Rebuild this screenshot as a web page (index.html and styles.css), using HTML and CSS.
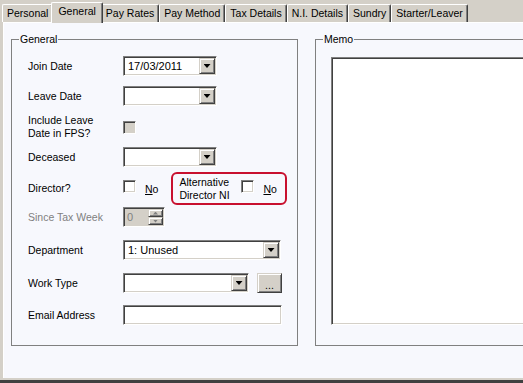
FILE: index.html
```html
<!DOCTYPE html>
<html lang="en">
<head>
    <meta charset="UTF-8">
    <title>Employee - General</title>
    <link rel="stylesheet" href="styles.css">
</head>
<body>
    <div class="tabs">
        <div class="tab">Personal</div>
        <div class="tab active">General</div>
        <div class="tab">Pay Rates</div>
        <div class="tab">Pay Method</div>
        <div class="tab">Tax Details</div>
        <div class="tab">N.I. Details</div>
        <div class="tab">Sundry</div>
        <div class="tab">Starter/Leaver</div>
    </div>

    <div class="panel">
        <fieldset class="group general">
            <legend>General</legend>
            <div class="rows">
                <div class="row">
                    <span class="label">Join Date</span>
                    <div class="combo combo-short"><span class="combo-text">17/03/2011</span><span class="drop"></span></div>
                </div>
                <div class="row">
                    <span class="label">Leave Date</span>
                    <div class="combo combo-short"><span class="combo-text"></span><span class="drop"></span></div>
                </div>
                <div class="row tall">
                    <span class="label">Include Leave<br>Date in FPS?</span>
                    <span class="check disabled"></span>
                </div>
                <div class="row">
                    <span class="label">Deceased</span>
                    <div class="combo combo-short"><span class="combo-text"></span><span class="drop"></span></div>
                </div>
                <div class="row alt-row">
                    <span class="label">Director?</span>
                    <span class="check"></span>
                    <span class="opt"><u>N</u>o</span>
                    <!-- highlighted option -->
                    <div class="alt">
                        <span class="alt-label">Alternative<br>Director NI</span>
                        <span class="check"></span>
                        <span class="opt"><u>N</u>o</span>
                    </div>
                </div>
                <div class="row">
                    <span class="label disabled">Since Tax Week</span>
                    <div class="spin">
                        <span class="spin-val">0</span>
                        <span class="spin-btns">
                            <span class="spin-btn up"></span>
                            <span class="spin-btn down"></span>
                        </span>
                    </div>
                </div>
                <div class="row">
                    <span class="label">Department</span>
                    <div class="combo combo-wide"><span class="combo-text">1: Unused</span><span class="drop"></span></div>
                </div>
                <div class="row">
                    <span class="label">Work Type</span>
                    <div class="combo combo-mid"><span class="combo-text"></span><span class="drop"></span></div>
                    <button class="dots">...</button>
                </div>
                <div class="row">
                    <span class="label">Email Address</span>
                    <input type="text" class="field">
                </div>
            </div>
        </fieldset>

        <fieldset class="group memo">
            <legend>Memo</legend>
            <textarea class="memo-box"></textarea>
        </fieldset>
    </div>
    <div class="frame-bottom"></div>
</body>
</html>
```

FILE: styles.css
```css
body {
    margin: 0;
    width: 523px;
    height: 383px;
    overflow: hidden;
    background-color: #d4d0c8;
    font-family: "Liberation Sans", Arial, sans-serif;
    font-size: 10.5px;
    color: #000;
}

/* tab strip */
.tabs {
    display: flex;
    align-items: flex-end;
    height: 22px;
    padding-left: 2px;
    position: relative;
    z-index: 1;
}
.tab {
    height: 18px;
    box-sizing: border-box;
    padding: 0 4px;
    line-height: 16px;
    white-space: nowrap;
    border-top: 1px solid #fff;
    border-left: 1px solid #fff;
    border-right: 1px solid #404040;
    border-radius: 2px 2px 0 0;
    box-shadow: inset -1px 0 #808080;
}
.tab.active {
    height: 21px;
    margin: 0 -2px -1px;
    padding: 0 6px;
    line-height: 16px;
    background-color: #d4d0c8;
    position: relative;
}

/* page body */
.panel {
    display: flex;
    height: 356px;
    box-sizing: border-box;
    margin-left: 3px;
    padding: 10px 0 0 7px;
    border-top: 1px solid #fff;
    border-left: 1px solid #fff;
    background-color: #f7f8fd;
    overflow: hidden;
}
.frame-bottom {
    height: 3px;
    margin-top: 2px;
    background-color: #404040;
}

.group {
    flex: none;
    margin: 0;
    box-sizing: border-box;
    height: 313px;
    min-width: 0;
    border: 1px solid #808080;
}
.group legend {
    padding: 0 1px;
    line-height: 12px;
}
.general {
    width: 287px;
    padding: 11px 0 0 16px;
}
.general legend {
    margin-left: -9px;
}
.memo {
    width: 240px;
    margin-left: 17px;
    padding: 12px 0 0 15px;
}
.memo legend {
    margin-left: -8px;
}

.rows {
    display: grid;
    grid-template-rows: 30px 27px 34px 25px 35px 33px 33px 32px 20px;
    align-items: start;
}
.row {
    display: flex;
    align-items: center;
    height: 20px;
}
.row.tall {
    height: 28px;
}
.row.alt-row {
    height: 33px;
}
.label {
    flex: none;
    width: 95px;
    line-height: 13px;
}
.label.disabled {
    color: #808080;
}

/* sunken controls */
.combo, .check, .spin, .field, .memo-box {
    box-sizing: border-box;
    border: 1px solid;
    border-color: #808080 #fff #fff #808080;
    box-shadow: inset 1px 1px #404040, inset -1px -1px #d4d0c8;
    background-color: #fff;
}
.combo {
    display: flex;
    height: 20px;
    padding: 1px;
}
.combo-short { width: 94px; }
.combo-mid { width: 126px; }
.combo-wide { width: 158px; }
.combo-text {
    flex: 1;
    padding-left: 3px;
    line-height: 17px;
    font-size: 11px;
}
.drop, .spin-btn, .dots {
    box-sizing: border-box;
    background-color: #d4d0c8;
    border: 1px solid;
    border-color: #d4d0c8 #404040 #404040 #d4d0c8;
    box-shadow: inset 1px 1px #fff, inset -1px -1px #808080;
}
.drop {
    width: 16px;
    height: 16px;
    display: flex;
    align-items: center;
    justify-content: center;
}
.drop::after {
    content: "";
    width: 7px;
    height: 4px;
    background-color: #000;
    clip-path: polygon(0 0, 7px 0, 3.5px 4px);
}

.check {
    flex: none;
    width: 13px;
    height: 13px;
}
.check.disabled {
    background-color: #d4d0c8;
}
.alt-row .check {
    margin-bottom: 4px;
}
.opt {
    margin-left: 9px;
}

.alt {
    display: flex;
    align-items: center;
    box-sizing: border-box;
    width: 116px;
    height: 33px;
    margin-left: 13px;
    padding-left: 6px;
    border: 2px solid #c8102e;
    border-radius: 6px;
}
.alt-label {
    width: 62px;
    line-height: 13px;
}

.spin {
    display: flex;
    width: 42px;
    height: 20px;
    padding: 1px;
    background-color: #d4d0c8;
}
.spin-val {
    flex: 1;
    padding-left: 2px;
    line-height: 16px;
    color: #808080;
    font-size: 11px;
}
.spin-btns {
    display: flex;
    flex-direction: column;
    width: 15px;
}
.spin-btn {
    flex: 1;
    display: flex;
    align-items: center;
    justify-content: center;
}
.spin-btn::after {
    content: "";
    width: 5px;
    height: 3px;
    background-color: #808080;
}
.spin-btn.up::after {
    clip-path: polygon(2.5px 0, 5px 3px, 0 3px);
}
.spin-btn.down::after {
    clip-path: polygon(0 0, 5px 0, 2.5px 3px);
}

.dots {
    width: 25px;
    height: 20px;
    margin-left: 8px;
    padding: 4px 0 0;
    font-family: inherit;
    font-size: 10.5px;
    line-height: 10px;
    color: #000;
}

.field {
    width: 159px;
    height: 20px;
    margin: 0;
    padding: 0 3px;
    font-family: inherit;
    font-size: 11px;
    outline: none;
}

.memo-box {
    display: block;
    width: 260px;
    height: 268px;
    margin: 0;
    padding: 0;
    resize: none;
    outline: none;
}
```
